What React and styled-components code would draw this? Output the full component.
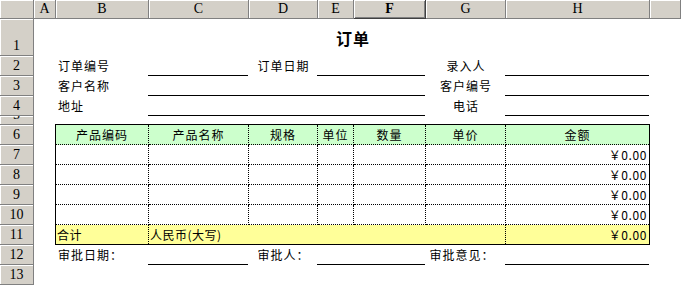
import React from "react";
import styled, { createGlobalStyle, css } from "styled-components";

const GlobalStyle = createGlobalStyle`
  html, body {
    margin: 0;
    padding: 0;
    background: #fff;
    overflow: hidden;
  }
`;

const LETTERS = ["A", "B", "C", "D", "E", "F", "G", "H"];
const COL = { A: 2, B: 3, C: 4, D: 5, E: 6, F: 7, G: 8, H: 9 };

const HEADS = ["产品编码", "产品名称", "规格", "单位", "数量", "单价", "金额"];

export default function App() {
  return (
    <>
      <GlobalStyle />
      <Sheet>
        <Corner />
        {LETTERS.map((c) => (
          <ColHead key={c} $selected={c === "F"}>
            {c}
          </ColHead>
        ))}
        <ColHead />
        {Array.from({ length: 13 }, (_, i) => (
          <RowHead key={i} $row={i + 2}>
            {i + 1}
          </RowHead>
        ))}

        <Title $col="B" $span={7} $row={1}>订单</Title>

        <Label $col="B" $row={2}>订单编号</Label>
        <Blank $col="C" $row={2} />
        <Label $col="D" $row={2} $center>订单日期</Label>
        <Blank $col="E" $span={2} $row={2} />
        <Label $col="G" $row={2} $center>录入人</Label>
        <Blank $col="H" $row={2} />

        <Label $col="B" $row={3}>客户名称</Label>
        <Blank $col="C" $span={4} $row={3} />
        <Label $col="G" $row={3} $center>客户编号</Label>
        <Blank $col="H" $row={3} />

        <Label $col="B" $row={4}>地址</Label>
        <Blank $col="C" $span={4} $row={4} />
        <Label $col="G" $row={4} $center>电话</Label>
        <Blank $col="H" $row={4} />

        <OrderTable>
          {HEADS.map((h, i) => (
            <HeadCell key={h} $last={i === HEADS.length - 1}>
              {h}
            </HeadCell>
          ))}
          {Array.from({ length: 4 }, (_, r) =>
            HEADS.map((h, i) =>
              i === HEADS.length - 1 ? (
                <Amount key={h + r} $last>
                  ￥0.00
                </Amount>
              ) : (
                <BodyCell key={h + r} />
              )
            )
          )}
          <TotalCell>合计</TotalCell>
          <TotalCell $span={5}>人民币(大写)</TotalCell>
          <TotalAmount $last>￥0.00</TotalAmount>
        </OrderTable>

        <Label $col="B" $row={12}>审批日期：</Label>
        <Blank $col="C" $row={12} />
        <Label $col="D" $row={12} $center>审批人：</Label>
        <Blank $col="E" $span={2} $row={12} />
        <Label $col="G" $row={12} $center $shift>审批意见：</Label>
        <Blank $col="H" $row={12} />
      </Sheet>
    </>
  );
}

const Sheet = styled.div`
  display: grid;
  grid-template-columns: 34px 22px 93px 100px 69px 36px 72px 80px 144px 1fr;
  grid-template-rows: 19px 37px 20px 20px 20px 9px repeat(8, 20px);
  width: 681px;
  height: 285px;
  overflow: hidden;
  font-family: "Noto Sans CJK SC", sans-serif;
  font-size: 12px;
  color: #000;
`;

const headerFace = css`
  background: #d4d0c8;
  box-sizing: border-box;
  border-right: 1px solid #808080;
  border-bottom: 1px solid #808080;
  box-shadow: inset 1px 1px 0 #fff;
  font-family: "Liberation Serif", serif;
  font-size: 14px;
  color: #000;
  overflow: hidden;
`;

const Corner = styled.div`
  ${headerFace};
`;

const ColHead = styled.div`
  ${headerFace};
  display: flex;
  align-items: center;
  justify-content: center;
  line-height: 16px;
  ${(p) =>
    p.$selected &&
    css`
      font-weight: bold;
      border-right-color: #404040;
      border-bottom-color: #404040;
      box-shadow: inset 1px 1px 0 #fff, inset -1px -1px 0 #808080;
    `}
`;

const RowHead = styled.div`
  ${headerFace};
  grid-column: 1;
  grid-row: ${(p) => p.$row};
  display: flex;
  align-items: flex-end;
  justify-content: center;
  line-height: 16px;
  padding-bottom: 1px;
`;

const placed = css`
  grid-column: ${(p) => `${COL[p.$col]} / span ${p.$span || 1}`};
  grid-row: ${(p) => p.$row + 1};
  min-width: 0;
`;

const Title = styled.div`
  ${placed};
  display: flex;
  align-items: center;
  justify-content: center;
  font-size: 16px;
  font-weight: bold;
  letter-spacing: 1px;
  padding-top: 1px;
`;

const Label = styled.div`
  ${placed};
  display: flex;
  align-items: center;
  justify-content: ${(p) => (p.$center ? "center" : "flex-start")};
  padding-left: ${(p) => (p.$center ? "0" : "2px")};
  padding-right: ${(p) => (p.$shift ? "8px" : "0")};
  letter-spacing: 1px;
  white-space: nowrap;
  line-height: 14px;
`;

const Blank = styled.div`
  ${placed};
  box-sizing: border-box;
  border-bottom: 1px solid #000;
  margin-left: -1px;
  margin-right: 1px;
`;

const OrderTable = styled.div`
  grid-column: 3 / span 7;
  grid-row: 7 / span 6;
  margin: -1px 0 0 -1px;
  display: grid;
  grid-template-columns: 93px 100px 69px 36px 72px 80px 1fr;
  grid-template-rows: repeat(5, 20px) 1fr;
  border: 1px solid #000;
`;

const cellBase = css`
  box-sizing: border-box;
  display: flex;
  align-items: center;
  border-right: ${(p) => (p.$last ? "none" : "1px dotted #000")};
  white-space: nowrap;
  overflow: hidden;
  line-height: 14px;
`;

const HeadCell = styled.div`
  ${cellBase};
  justify-content: center;
  background: #ccffcc;
  border-bottom: 1px dotted #000;
  letter-spacing: 1px;
`;

const BodyCell = styled.div`
  ${cellBase};
  border-bottom: 1px dotted #000;
`;

const Amount = styled(BodyCell)`
  justify-content: flex-end;
  padding-right: 2px;
  letter-spacing: 0.6px;
`;

const TotalCell = styled.div`
  ${cellBase};
  grid-column: span ${(p) => p.$span || 1};
  background: #ffff99;
  padding-left: 1px;
  letter-spacing: 0.5px;
`;

const TotalAmount = styled.div`
  ${cellBase};
  background: #ffff99;
  justify-content: flex-end;
  padding-right: 2px;
  letter-spacing: 0.6px;
`;
